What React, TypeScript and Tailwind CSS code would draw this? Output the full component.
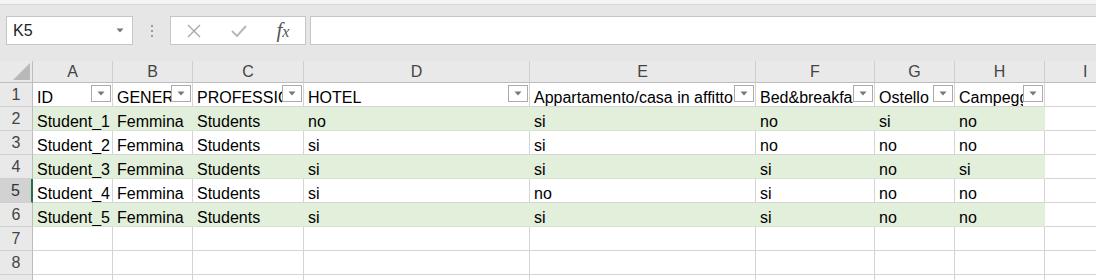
const cols = [
  { key: "A", w: "w-[80px]" },
  { key: "B", w: "w-[80px]" },
  { key: "C", w: "w-[111px]" },
  { key: "D", w: "w-[226px]" },
  { key: "E", w: "w-[226px]" },
  { key: "F", w: "w-[119px]" },
  { key: "G", w: "w-[80px]" },
  { key: "H", w: "w-[90px]" },
];

const headers = [
  "ID",
  "GENERE",
  "PROFESSIONE",
  "HOTEL",
  "Appartamento/casa in affitto",
  "Bed&breakfast",
  "Ostello",
  "Campeggio",
];

const rows = [
  ["Student_1", "Femmina", "Students", "no", "si", "no", "si", "no"],
  ["Student_2", "Femmina", "Students", "si", "si", "no", "no", "no"],
  ["Student_3", "Femmina", "Students", "si", "si", "si", "no", "si"],
  ["Student_4", "Femmina", "Students", "si", "no", "si", "no", "no"],
  ["Student_5", "Femmina", "Students", "si", "si", "si", "no", "no"],
];

function FilterButton() {
  return (
    <div className="shrink-0 w-[20px] h-[17px] mt-[2px] mr-[1px] border border-[#ababab] bg-white flex items-center justify-center">
      <svg width="8" height="5" viewBox="0 0 8 5">
        <path d="M0.5 0.5 L7.5 0.5 L4 4.5 Z" fill="#777" />
      </svg>
    </div>
  );
}

function RowHead({ n, active }: { n: number; active?: boolean }) {
  return (
    <div
      className={`w-[33px] h-[24px] shrink-0 flex items-center justify-center border-b border-[#cfcfcf] ${
        active
          ? "bg-[#d2d2d2] border-r-2 border-r-[#217346] text-[#333]"
          : "bg-[#e9e9e9] border-r border-r-[#bdbdbd] text-[#444]"
      }`}
    >
      {n}
    </div>
  );
}

export default function App() {
  return (
    <div className="w-[1096px] h-[280px] overflow-hidden bg-white text-[16px] font-['Liberation_Sans',Arial,sans-serif]">
      {/* strip above toolbar */}
      <div className="h-[5px] bg-[#f3f3f3] border-b border-[#d6d6d6]" />

      {/* name box + formula bar */}
      <div className="h-[56px] bg-[#e6e6e6] flex items-start pt-[11px] pl-[6px]">
        <div className="w-[127px] h-[29px] bg-white border border-[#c6c6c6] flex items-center justify-between pl-[6px] pr-[8px] text-[#222]">
          <span>K5</span>
          <svg width="8" height="5" viewBox="0 0 8 5">
            <path d="M0.5 0.5 L7.5 0.5 L4 4.5 Z" fill="#777" />
          </svg>
        </div>
        <div className="w-[37px] h-[29px] flex flex-col items-center justify-center gap-[3px]">
          <span className="w-[2px] h-[2px] bg-[#9a9a9a]" />
          <span className="w-[2px] h-[2px] bg-[#9a9a9a]" />
          <span className="w-[2px] h-[2px] bg-[#9a9a9a]" />
        </div>
        <div className="w-[136px] h-[29px] bg-white border border-[#c6c6c6] flex items-center">
          <div className="w-[46px] flex justify-center">
            <svg width="14" height="14" viewBox="0 0 14 14">
              <path d="M1 1 L13 13 M13 1 L1 13" stroke="#a8a8a8" strokeWidth="1.4" />
            </svg>
          </div>
          <div className="w-[44px] flex justify-center">
            <svg width="16" height="12" viewBox="0 0 16 12">
              <path d="M1 6 L6 11 L15 1" stroke="#b8b8b8" strokeWidth="2" fill="none" />
            </svg>
          </div>
          <div className="w-[44px] flex justify-center text-[#555] italic text-[21px] leading-none font-['Liberation_Serif',serif]">
            <span>
              f<span className="text-[16px]">x</span>
            </span>
          </div>
        </div>
        <div className="ml-[4px] flex-1 h-[29px] bg-white border border-r-0 border-[#c6c6c6]" />
      </div>

      {/* grid */}
      <div className="flex flex-col">
        {/* column letters */}
        <div className="flex h-[22px]">
          <div className="w-[33px] shrink-0 bg-[#e9e9e9] border-r border-b border-[#bdbdbd] flex items-end justify-end pr-[2px] pb-[2px]">
            <svg width="17" height="17" viewBox="0 0 17 17">
              <path d="M17 0 L17 17 L0 17 Z" fill="#b9b9b9" />
            </svg>
          </div>
          {cols.map((c) => (
            <div
              key={c.key}
              className={`${c.w} shrink-0 bg-[#e9e9e9] border-r border-b border-r-[#cfcfcf] border-b-[#bdbdbd] flex items-center justify-center text-[#444]`}
            >
              {c.key}
            </div>
          ))}
          <div className="flex-1 bg-[#e9e9e9] border-b border-[#bdbdbd] flex items-center pl-[38px] text-[#444]">
            I
          </div>
        </div>

        {/* row 1: table headers */}
        <div className="flex h-[24px]">
          <RowHead n={1} />
          {cols.map((c, i) => (
            <div
              key={c.key}
              className={`${c.w} shrink-0 flex items-start border-r border-b border-[#d4d4d4] bg-white text-black`}
            >
              <span className="flex-1 overflow-hidden whitespace-nowrap pl-[4px] pt-[3px]">{headers[i]}</span>
              <FilterButton />
            </div>
          ))}
          <div className="flex-1 border-b border-[#d4d4d4]" />
        </div>

        {/* data rows */}
        {rows.map((r, ri) => {
          const green = ri % 2 === 0;
          return (
            <div key={ri} className="flex h-[24px]">
              <RowHead n={ri + 2} active={ri === 3} />
              {cols.map((c, ci) => (
                <div
                  key={c.key}
                  className={`${c.w} shrink-0 border-r border-b overflow-hidden whitespace-nowrap pl-[4px] pt-[3px] text-black ${
                    green
                      ? "bg-[#e2efda] border-r-[#e2efda] border-b-[#d9e4d2]"
                      : "bg-white border-[#d4d4d4]"
                  }`}
                >
                  {r[ci]}
                </div>
              ))}
              <div className="flex-1 border-b border-[#d4d4d4]" />
            </div>
          );
        })}

        {/* empty rows */}
        {[7, 8, 9].map((n) => (
          <div key={n} className="flex h-[24px]">
            <RowHead n={n} />
            {cols.map((c) => (
              <div key={c.key} className={`${c.w} shrink-0 border-r border-b border-[#d4d4d4]`} />
            ))}
            <div className="flex-1 border-b border-[#d4d4d4]" />
          </div>
        ))}
      </div>
    </div>
  );
}
